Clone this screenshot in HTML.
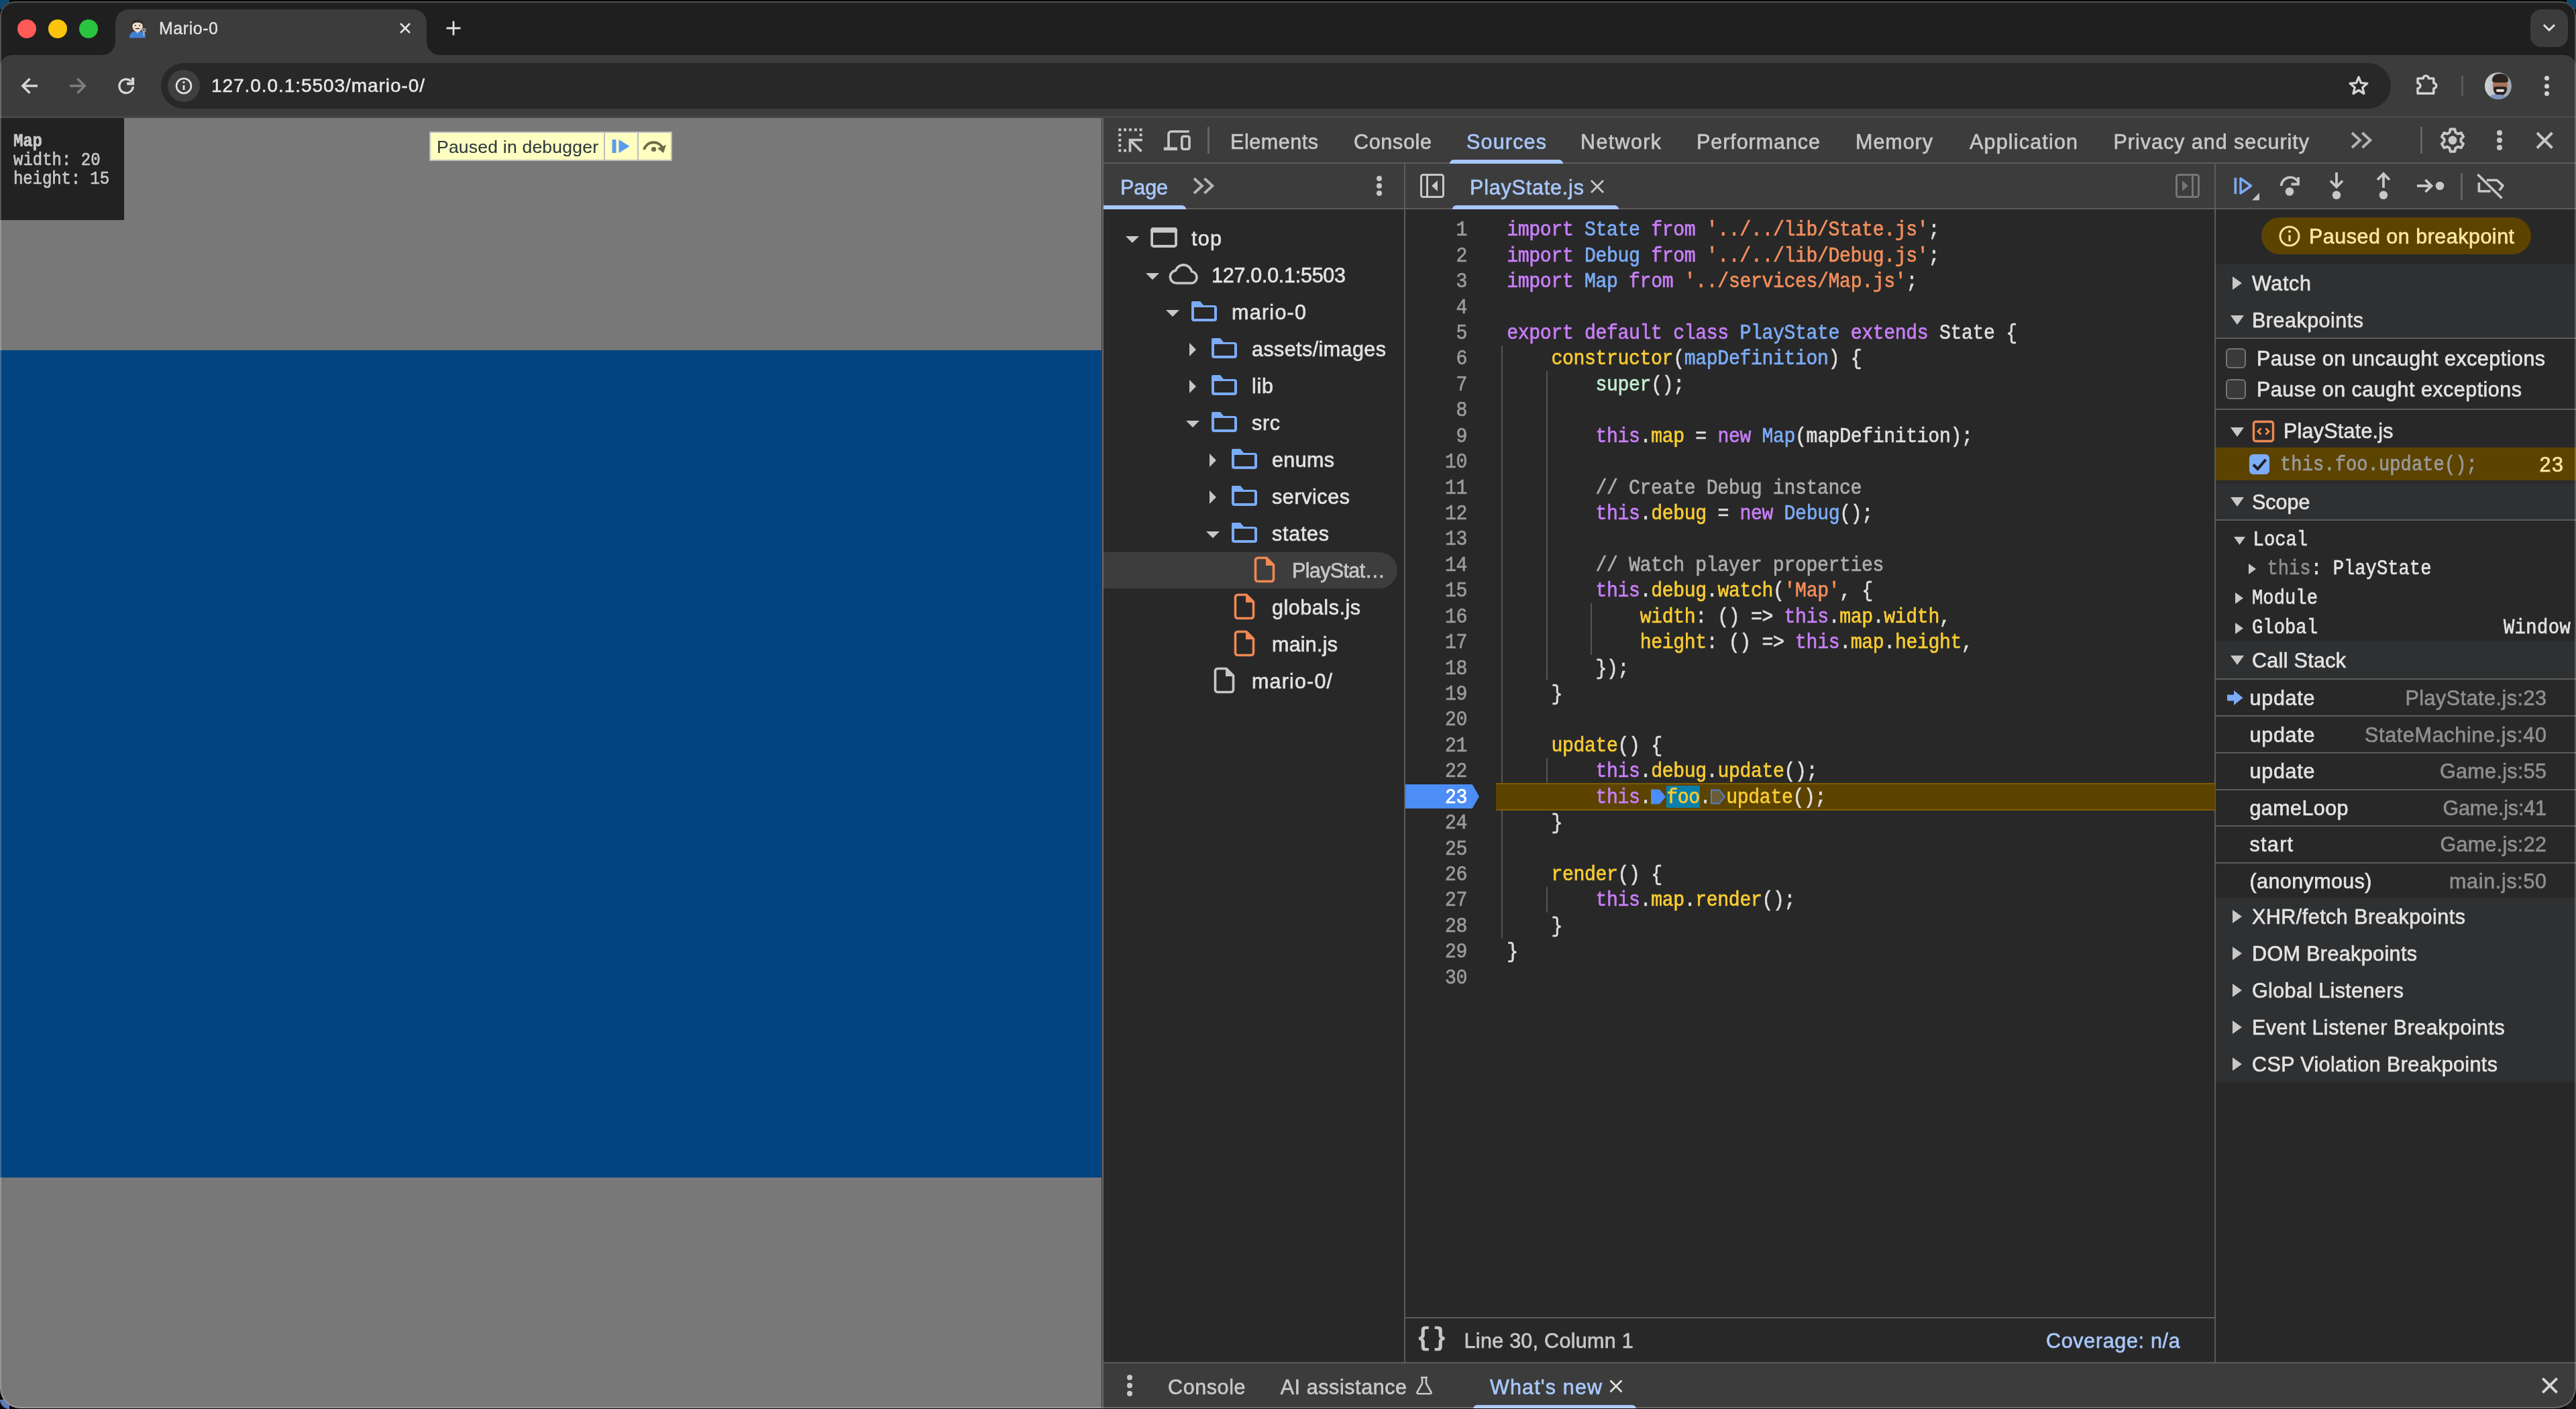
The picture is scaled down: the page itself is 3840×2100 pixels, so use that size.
<!DOCTYPE html>
<html><head><meta charset="utf-8"><title>Mario-0</title><style>
html,body{margin:0;padding:0}
body{width:3840px;height:2100px;position:relative;overflow:hidden;background:#050608;font-family:"Liberation Sans",sans-serif;}
.r{position:absolute;display:block}
.t{position:absolute;white-space:pre;-webkit-text-stroke:0.65px;}
#w{position:absolute;left:0;top:0;width:3840px;height:2100px;will-change:transform;overflow:hidden;clip-path:inset(2px 0px 1px 0px round 22px 22px 30px 30px)}
.c{position:absolute;width:14px;height:14px}
.m{font-family:"Liberation Mono",monospace;-webkit-text-stroke:0.6px;transform:scaleY(1.12);transform-origin:50% 50%}
</style></head>
<body><div class="c" style="left:0;top:0;background:#10486f"></div><div class="c" style="right:0;top:0;background:#10486f"></div><div class="c" style="left:0;bottom:0;background:#5f7bb8;border-radius:0 0 0 24px"></div><div class="c" style="right:0;bottom:0;background:#1b1b1b"></div><div id="w">
<!-- s_chrome -->
<div class="r" style="left:0px;top:0px;width:3840px;height:110px;background:#1f1f1f;"></div>
<div class="r" style="left:0px;top:82px;width:3840px;height:94px;background:#3c3c3c;border-radius:18px 18px 0 0;"></div>
<div class="r" style="left:0px;top:173px;width:3840px;height:3px;background:#474747;"></div>
<div class="r" style="left:172px;top:14px;width:464px;height:70px;background:#3c3c3c;border-radius:20px 20px 0 0;"></div>
<svg class="r" style="left:152px;top:62px;" width="20" height="20" viewBox="0 0 20 20"><path d="M20 0 V20 H0 A20 20 0 0 0 20 0Z" fill="#3c3c3c"/></svg>
<svg class="r" style="left:636px;top:62px;" width="20" height="20" viewBox="0 0 20 20"><path d="M0 0 V20 H20 A20 20 0 0 1 0 0Z" fill="#3c3c3c"/></svg>
<div class="r" style="left:26px;top:29px;width:28px;height:28px;background:#fe5a58;border-radius:50%;"></div>
<div class="r" style="left:72px;top:29px;width:28px;height:28px;background:#fcc40c;border-radius:50%;"></div>
<div class="r" style="left:118px;top:29px;width:28px;height:28px;background:#29c440;border-radius:50%;"></div>
<svg class="r" style="left:190px;top:27px;" width="30" height="30" viewBox="0 0 30 30"><path d="M3 29.5 Q3 21 10 20 L20 20 Q27 21 27 29.5Z" fill="#3f7fd6"/><path d="M12 19 L15 23 L18 19Z" fill="#e9c4ad"/><ellipse cx="15" cy="12" rx="7.6" ry="8.6" fill="#f6dccb"/><path d="M6.6 11 Q6 2.5 15 2.2 Q24 2.5 23.4 11 Q21.5 6.5 15 6.5 Q8.500 6.5 6.6 11Z" fill="#2f2a28"/><path d="M10.5 15.8 Q15 13.6 19.5 15.8 Q15 17.4 10.5 15.800Z" fill="#2f2a28"/><circle cx="11.8" cy="11" r="1" fill="#3a3330"/><circle cx="18.2" cy="11" r="1" fill="#3a3330"/><path d="M24.5 19 v7.5" stroke="#aab2bb" stroke-width="2.2"/><circle cx="24.5" cy="18" r="2.2" fill="none" stroke="#aab2bb" stroke-width="1.6"/></svg>
<div class="t" style="left:237.0px;top:26.0px;height:32px;line-height:32px;font-size:25px;color:#e3e3e3;letter-spacing:0.54px;-webkit-text-stroke:0.35px;">Mario-0</div>
<svg class="r" style="left:594px;top:32px;" width="20" height="20" viewBox="0 0 20 20"><path d="M3 3 L17 17 M17 3 L3 17" stroke="#e3e3e3" stroke-width="2.6" fill="none"/></svg>
<svg class="r" style="left:664px;top:30px;" width="24" height="24" viewBox="0 0 24 24"><path d="M12 1.5 V22.5 M1.5 12 H22.5" stroke="#e3e3e3" stroke-width="2.8" fill="none"/></svg>
<div class="r" style="left:3772px;top:14px;width:56px;height:56px;background:#3c3c3c;border-radius:16px;"></div>
<svg class="r" style="left:3788px;top:32px;" width="24" height="20" viewBox="0 0 24 20"><path d="M4 5 L12 13 L20 5" stroke="#e3e3e3" stroke-width="3" fill="none"/></svg>
<svg class="r" style="left:28px;top:112px;" width="32" height="32" viewBox="0 0 32 32"><path d="M28 16 H6 M16.5 5.2 L5.700 16 L16.5 26.8" stroke="#d6d6d6" stroke-width="3.4" fill="none"/></svg>
<svg class="r" style="left:100px;top:112px;" width="32" height="32" viewBox="0 0 32 32"><path d="M4 16 H26 M15.5 5.2 L26.3 16 L15.5 26.8" stroke="#7d7d7d" stroke-width="3.4" fill="none"/></svg>
<svg class="r" style="left:172px;top:112px;" width="32" height="32" viewBox="0 0 32 32"><path d="M26.3 17 A10.2 10.2 0 1 1 23.2 9" stroke="#d6d6d6" stroke-width="3.3" fill="none"/><path d="M26 3.8 V12.6 H17.2" stroke="#d6d6d6" stroke-width="4.2" fill="none" stroke-linejoin="miter"/></svg>
<div class="r" style="left:240px;top:94px;width:3324px;height:68px;background:#282828;border-radius:34px;"></div>
<div class="r" style="left:250px;top:104px;width:48px;height:48px;background:#3f3f3f;border-radius:50%;"></div>
<svg class="r" style="left:261px;top:115px;" width="26" height="26" viewBox="0 0 26 26"><circle cx="13" cy="13" r="11" stroke="#e3e3e3" stroke-width="2.6" fill="none"/><path d="M13 12 V19" stroke="#e3e3e3" stroke-width="2.8"/><circle cx="13" cy="7.6" r="1.7" fill="#e3e3e3"/></svg>
<div class="t" style="left:315.0px;top:110.0px;height:36px;line-height:36px;font-size:28px;color:#e8e8e8;letter-spacing:0.94px;-webkit-text-stroke:0.5px;">127.0.0.1:5503/mario-0/</div>
<svg class="r" style="left:3498px;top:108px;" width="36" height="38" viewBox="0 0 36 38"><path d="M18.0 6.9 L21.5 15.6 L30.9 16.3 L23.7 22.4 L26.0 31.5 L18.0 26.5 L10.0 31.5 L12.3 22.4 L5.1 16.3 L14.5 15.6Z" stroke="#d4d4d4" stroke-width="3.3" fill="none" stroke-linejoin="round"/></svg>
<svg class="r" style="left:3598px;top:108px;" width="40" height="40" viewBox="0 0 40 40"><path d="M6 8.9 H14.3 A4 4 0 0 1 22.3 8.9 H29.8 V15.7 A4 4 0 0 1 29.8 23.7 V31.3 H6 V23.7 A4 4 0 0 0 6 15.7Z" stroke="#d4d4d4" stroke-width="3.4" fill="none" stroke-linejoin="round"/></svg>
<div class="r" style="left:3669px;top:112px;width:3px;height:32px;background:#5a5a5a;border-radius:2px;"></div>
<div class="r" style="left:3704px;top:108px;width:40px;height:40px;border-radius:50%;overflow:hidden;background:linear-gradient(90deg,#cfd3d6 0,#b9bec4 45%,#9aa3ad 100%);"><div class="r" style="left:12px;top:6px;width:22px;height:28px;border-radius:45%;background:#a87455;"></div><div class="r" style="left:11px;top:2px;width:24px;height:13px;border-radius:12px 12px 5px 5px;background:#2a2320;"></div><div class="r" style="left:13px;top:21px;width:20px;height:14px;border-radius:4px 4px 10px 10px;background:#2a2320;"></div><div class="r" style="left:17px;top:25px;width:12px;height:4px;border-radius:2px;background:#e8ded8;"></div><div class="r" style="left:4px;top:33px;width:30px;height:12px;border-radius:10px 10px 0 0;background:#7f93bd;"></div></div>
<div class="r" style="left:3792.5px;top:113.3px;width:7px;height:7px;background:#d4d4d4;border-radius:50%;"></div>
<div class="r" style="left:3792.5px;top:124.5px;width:7px;height:7px;background:#d4d4d4;border-radius:50%;"></div>
<div class="r" style="left:3792.5px;top:135.7px;width:7px;height:7px;background:#d4d4d4;border-radius:50%;"></div>
<div class="r" style="left:0px;top:176px;width:1642px;height:1924px;background:#787878;"></div>
<div class="r" style="left:0px;top:522px;width:1642px;height:1233px;background:#024482;"></div>
<div class="r" style="left:0px;top:176px;width:185px;height:152px;background:#222222;"></div>
<div class="t m" style="left:20.0px;top:194.5px;height:31px;line-height:31px;font-size:24px;color:#c8c8c8;font-weight:700;letter-spacing:-0.10px;">Map</div>
<div class="t m" style="left:20.0px;top:222.5px;height:31px;line-height:31px;font-size:24px;color:#c8c8c8;">width: 20</div>
<div class="t m" style="left:20.0px;top:250.5px;height:31px;line-height:31px;font-size:24px;color:#c8c8c8;letter-spacing:-0.11px;">height: 15</div>
<div class="r" style="left:640px;top:196px;width:362px;height:44px;background:#ffffc2;box-sizing:border-box;border:2px solid #bdbdbd;"></div>
<div class="r" style="left:900px;top:198px;width:2px;height:40px;background:#bdbdbd;"></div>
<div class="r" style="left:950px;top:198px;width:2px;height:40px;background:#bdbdbd;"></div>
<div class="t" style="left:651.0px;top:201.5px;height:34px;line-height:34px;font-size:26.5px;color:#2f3a3e;letter-spacing:0.22px;-webkit-text-stroke:0.1px;">Paused in debugger</div>
<svg class="r" style="left:910px;top:206px;" width="32" height="24" viewBox="0 0 32 24"><rect x="2.5" y="2" width="6" height="20" fill="#5a9bf0"/><path d="M12.5 2 L28.5 12 L12.5 22Z" fill="#5a9bf0"/></svg>
<svg class="r" style="left:956px;top:204px;" width="40" height="28" viewBox="0 0 40 28"><path d="M4 19 A15 15 0 0 1 32 17" stroke="#6b6b47" stroke-width="4" fill="none"/><path d="M37 12 L33 24 L24 17Z" fill="#6b6b47"/><circle cx="18.5" cy="18.5" r="3.6" fill="#6b6b47"/></svg>
<div class="r" style="left:1642px;top:176px;width:1px;height:1924px;background:#333;"></div>
<div class="r" style="left:1643px;top:176px;width:2px;height:1924px;background:#6a6a6a;"></div>
<!-- s_dttop -->
<div class="r" style="left:1645px;top:176px;width:2195px;height:1924px;background:#282828;"></div>
<div class="r" style="left:1645px;top:176px;width:2195px;height:66px;background:#3c3c3c;"></div>
<div class="r" style="left:1645px;top:242px;width:2195px;height:2px;background:#5c5c5c;"></div>
<svg class="r" style="left:1660px;top:186px;" width="50" height="46" viewBox="0 0 50 46"><rect x="7.3" y="5.4" width="4" height="4" fill="#c7c7c7"/><rect x="15.1" y="5.4" width="4" height="4" fill="#c7c7c7"/><rect x="22.9" y="5.4" width="4" height="4" fill="#c7c7c7"/><rect x="30.8" y="5.4" width="4" height="4" fill="#c7c7c7"/><rect x="38.6" y="5.4" width="4" height="4" fill="#c7c7c7"/><rect x="7.3" y="13.1" width="4" height="4" fill="#c7c7c7"/><rect x="7.3" y="20.9" width="4" height="4" fill="#c7c7c7"/><rect x="7.3" y="28.7" width="4" height="4" fill="#c7c7c7"/><rect x="7.3" y="36.4" width="4" height="4" fill="#c7c7c7"/><rect x="38.6" y="13.1" width="4" height="4" fill="#c7c7c7"/><rect x="15.1" y="36.4" width="4" height="4" fill="#c7c7c7"/><path d="M42.8 22.6 H24.5 V40.6 M24.5 22.6 L41.5 39.6" stroke="#c7c7c7" stroke-width="3.7" fill="none"/></svg>
<svg class="r" style="left:1730px;top:190px;" width="50" height="40" viewBox="0 0 50 40"><path d="M12 29.7 V10 a4 4 0 0 1 4 -4 H42.7" stroke="#c7c7c7" stroke-width="3.6" fill="none"/><path d="M4.8 31.8 H25" stroke="#c7c7c7" stroke-width="4.7" fill="none"/><rect x="31.8" y="13.2" width="11.2" height="19.1" rx="2.5" stroke="#c7c7c7" stroke-width="3.6" fill="none"/></svg>
<div class="r" style="left:1800px;top:189px;width:3px;height:40px;background:#646464;"></div>
<div class="t" style="left:1834.0px;top:191.0px;height:40px;line-height:40px;font-size:30.5px;color:#c7c7c7;letter-spacing:0.55px;">Elements</div>
<div class="t" style="left:2018.0px;top:191.0px;height:40px;line-height:40px;font-size:30.5px;color:#c7c7c7;letter-spacing:0.68px;">Console</div>
<div class="t" style="left:2186.0px;top:191.0px;height:40px;line-height:40px;font-size:30.5px;color:#a8c7fa;letter-spacing:1.18px;">Sources</div>
<div class="t" style="left:2356.0px;top:191.0px;height:40px;line-height:40px;font-size:30.5px;color:#c7c7c7;letter-spacing:1.36px;">Network</div>
<div class="t" style="left:2529.0px;top:191.0px;height:40px;line-height:40px;font-size:30.5px;color:#c7c7c7;letter-spacing:0.94px;">Performance</div>
<div class="t" style="left:2766.0px;top:191.0px;height:40px;line-height:40px;font-size:30.5px;color:#c7c7c7;letter-spacing:0.97px;">Memory</div>
<div class="t" style="left:2936.0px;top:191.0px;height:40px;line-height:40px;font-size:30.5px;color:#c7c7c7;letter-spacing:1.18px;">Application</div>
<div class="t" style="left:3150.5px;top:191.0px;height:40px;line-height:40px;font-size:30.5px;color:#c7c7c7;letter-spacing:0.98px;">Privacy and security</div>
<div class="r" style="left:2161px;top:238px;width:169px;height:6px;background:#a8c7fa;border-radius:6px 6px 0 0;"></div>
<svg class="r" style="left:3503px;top:194px;" width="36" height="30" viewBox="0 0 36 30"><path d="M3 4 L15 15 L3 26 M18.4 4 L30.4 15 L18.4 26" stroke="#b4b4b4" stroke-width="3.9" fill="none"/></svg>
<div class="r" style="left:3607.5px;top:189px;width:3px;height:40px;background:#646464;"></div>
<svg class="r" style="left:3636px;top:189px;" width="40" height="40" viewBox="0 0 40 40"><path fill="none" stroke="#c7c7c7" stroke-width="3.9" stroke-linejoin="round" d="M16.6 3.5 h6.8 l1 4.9 l3.6 2.1 l4.7 -1.6 l3.4 5.9 l-3.7 3.3 v4 l3.7 3.3 l-3.4 5.9 l-4.7 -1.6 l-3.6 2.1 l-1 4.9 h-6.8 l-1 -4.9 l-3.6 -2.1 l-4.7 1.6 l-3.4 -5.9 l3.7 -3.3 v-4 l-3.7 -3.3 l3.4 -5.9 l4.7 1.6 l3.6 -2.1Z"/><circle cx="20" cy="20" r="6.4" fill="#c7c7c7"/></svg>
<div class="r" style="left:3721.8px;top:193.5px;width:8.4px;height:8.4px;background:#c7c7c7;border-radius:50%;"></div><div class="r" style="left:3721.8px;top:204.8px;width:8.4px;height:8.4px;background:#c7c7c7;border-radius:50%;"></div><div class="r" style="left:3721.8px;top:216.10000000000002px;width:8.4px;height:8.4px;background:#c7c7c7;border-radius:50%;"></div>
<svg class="r" style="left:3777px;top:193px;" width="32" height="32" viewBox="0 0 32 32"><path d="M5 5 L27.5 27.5 M27.5 5 L5 27.5" stroke="#c7c7c7" stroke-width="3.9" fill="none"/></svg>
<div class="r" style="left:1645px;top:244px;width:2195px;height:66px;background:#3c3c3c;"></div>
<div class="r" style="left:1645px;top:310px;width:2195px;height:2px;background:#5c5c5c;"></div>
<div class="r" style="left:2093px;top:244px;width:2px;height:1786px;background:#5c5c5c;"></div>
<div class="r" style="left:3301px;top:244px;width:2px;height:1786px;background:#5c5c5c;"></div>
<div class="t" style="left:1670.0px;top:259.0px;height:40px;line-height:40px;font-size:30.5px;color:#a8c7fa;letter-spacing:-0.08px;">Page</div>
<div class="r" style="left:1645px;top:306px;width:123px;height:6px;background:#a8c7fa;border-radius:0 6px 0 0;"></div>
<svg class="r" style="left:1777px;top:262px;" width="36" height="30" viewBox="0 0 36 30"><path d="M3 4 L15 15 L3 26 M18.4 4 L30.4 15 L18.4 26" stroke="#b4b4b4" stroke-width="3.9" fill="none"/></svg>
<div class="r" style="left:2051.8px;top:261.5px;width:8.4px;height:8.4px;background:#c7c7c7;border-radius:50%;"></div><div class="r" style="left:2051.8px;top:272.8px;width:8.4px;height:8.4px;background:#c7c7c7;border-radius:50%;"></div><div class="r" style="left:2051.8px;top:284.1px;width:8.4px;height:8.4px;background:#c7c7c7;border-radius:50%;"></div>
<svg class="r" style="left:2115px;top:257px;" width="40" height="40" viewBox="0 0 40 40"><rect x="3.5" y="3.5" width="33" height="33" rx="3" stroke="#c7c7c7" stroke-width="3" fill="none"/><path d="M12.5 3.5 V36.5" stroke="#c7c7c7" stroke-width="3"/><path d="M28 12 V28 L19 20Z" fill="#c7c7c7"/></svg>
<div class="t" style="left:2191.0px;top:259.0px;height:40px;line-height:40px;font-size:30.5px;color:#a8c7fa;letter-spacing:0.81px;">PlayState.js</div>
<svg class="r" style="left:2369px;top:266px;" width="24" height="24" viewBox="0 0 24 24"><path d="M3 3 L21 21 M21 3 L3 21" stroke="#c7c7c7" stroke-width="2.8" fill="none"/></svg>
<div class="r" style="left:2165px;top:306px;width:248px;height:6px;background:#a8c7fa;border-radius:6px 6px 0 0;"></div>
<svg class="r" style="left:3241px;top:257px;" width="40" height="40" viewBox="0 0 40 40"><rect x="3.5" y="3.5" width="33" height="33" rx="3" stroke="#757575" stroke-width="3" fill="none"/><path d="M27.5 3.5 V36.5" stroke="#757575" stroke-width="3"/><path d="M12 12 V28 L21 20Z" fill="#757575"/></svg>
<svg class="r" style="left:3326px;top:258px;" width="44" height="42" viewBox="0 0 44 42"><path d="M6.3 7 V31" stroke="#7cacf8" stroke-width="3.6"/><path d="M14 8 L29.5 19 L14 30Z" stroke="#7cacf8" stroke-width="3.4" fill="none" stroke-linejoin="round"/><path d="M42 29.5 V40.5 H31Z" fill="#c7c7c7"/></svg>
<svg class="r" style="left:3392px;top:256px;" width="44" height="42" viewBox="0 0 44 42"><path d="M8.5 21 A13.5 13.5 0 0 1 33 14" stroke="#c7c7c7" stroke-width="3.8" fill="none"/><path d="M34 8 V18.5 H23.5" stroke="#c7c7c7" stroke-width="3.8" fill="none"/><circle cx="21" cy="29.5" r="6.3" fill="#c7c7c7"/></svg>
<svg class="r" style="left:3462px;top:254px;" width="42" height="48" viewBox="0 0 42 48"><path d="M21 3 V24 M12 15.5 L21 24.5 L30 15.5" stroke="#c7c7c7" stroke-width="3.8" fill="none"/><circle cx="21" cy="36.7" r="6.3" fill="#c7c7c7"/></svg>
<svg class="r" style="left:3532px;top:254px;" width="42" height="48" viewBox="0 0 42 48"><path d="M21 26 V5.5 M12 14 L21 5 L30 14" stroke="#c7c7c7" stroke-width="3.8" fill="none"/><circle cx="21" cy="36.7" r="6.3" fill="#c7c7c7"/></svg>
<svg class="r" style="left:3598px;top:258px;" width="52" height="38" viewBox="0 0 52 38"><path d="M5 19 H26 M17.5 10 L26.5 19 L17.5 28" stroke="#c7c7c7" stroke-width="3.8" fill="none"/><circle cx="39" cy="19" r="6.3" fill="#c7c7c7"/></svg>
<div class="r" style="left:3667.5px;top:258px;width:3px;height:40px;background:#646464;"></div>
<svg class="r" style="left:3690px;top:256px;" width="48" height="42" viewBox="0 0 48 42"><path d="M17 12.5 H32 L41 20.7 L35.8 27.8 M5.4 16 V29 H22.7" stroke="#c7c7c7" stroke-width="3.6" fill="none" stroke-linejoin="round"/><path d="M3.5 4 L39.5 39.5" stroke="#c7c7c7" stroke-width="3.6"/></svg>
<!-- s_nav -->
<div class="r" style="left:1645px;top:823px;width:438px;height:54px;background:#3d3d3d;border-radius:0 27px 27px 0;"></div>
<svg class="r" style="left:1677px;top:351px;" width="22" height="12" viewBox="0 0 22 12"><path d="M1 1 H21 L11 11Z" fill="#c7c7c7"/></svg>
<svg class="r" style="left:1714px;top:338px;" width="42" height="32" viewBox="0 0 42 32"><rect x="3.1" y="3" width="35.9" height="26" rx="2.5" stroke="#c7c7c7" stroke-width="3.8" fill="none"/><path d="M1.2 8.8 V5 a4 4 0 0 1 4 -3.9 H37 a4 4 0 0 1 3.9 3.9 V8.800Z" fill="#c7c7c7"/></svg>
<div class="t" style="left:1776.0px;top:335.0px;height:40px;line-height:40px;font-size:30.5px;color:#e3e3e3;letter-spacing:1.30px;">top</div>
<svg class="r" style="left:1707px;top:406px;" width="22" height="12" viewBox="0 0 22 12"><path d="M1 1 H21 L11 11Z" fill="#c7c7c7"/></svg>
<svg class="r" style="left:1741px;top:393px;" width="50" height="34" viewBox="0 0 50 34"><path d="M13 29 a9.5 9.5 0 0 1 -1.5 -18.9 a12.5 12.5 0 0 1 24 1.6 a8.8 8.8 0 0 1 0.5 17.3Z" stroke="#c7c7c7" stroke-width="3.7" fill="none" stroke-linejoin="round"/></svg>
<div class="t" style="left:1806.0px;top:390.0px;height:40px;line-height:40px;font-size:30.5px;color:#e3e3e3;letter-spacing:-0.27px;">127.0.0.1:5503</div>
<svg class="r" style="left:1737px;top:461px;" width="22" height="12" viewBox="0 0 22 12"><path d="M1 1 H21 L11 11Z" fill="#c7c7c7"/></svg>
<svg class="r" style="left:1774px;top:447px;" width="42" height="34" viewBox="0 0 42 34"><path d="M4 2 H15 L20 8 H21 V11 H6 V28 H36 V11 H21 V8 H36 a4 4 0 0 1 4 4 V28 a4 4 0 0 1 -4 4 H6 a4 4 0 0 1 -4 -4 V4 a2 2 0 0 1 2 -2Z" fill="#7cacf8"/></svg>
<div class="t" style="left:1836.0px;top:445.0px;height:40px;line-height:40px;font-size:30.5px;color:#e3e3e3;letter-spacing:1.27px;">mario-0</div>
<svg class="r" style="left:1772px;top:510px;" width="12" height="22" viewBox="0 0 12 22"><path d="M1 1 V21 L11 11Z" fill="#c7c7c7"/></svg>
<svg class="r" style="left:1804px;top:502px;" width="42" height="34" viewBox="0 0 42 34"><path d="M4 2 H15 L20 8 H21 V11 H6 V28 H36 V11 H21 V8 H36 a4 4 0 0 1 4 4 V28 a4 4 0 0 1 -4 4 H6 a4 4 0 0 1 -4 -4 V4 a2 2 0 0 1 2 -2Z" fill="#7cacf8"/></svg>
<div class="t" style="left:1866.0px;top:500.0px;height:40px;line-height:40px;font-size:30.5px;color:#e3e3e3;letter-spacing:0.42px;">assets/images</div>
<svg class="r" style="left:1772px;top:565px;" width="12" height="22" viewBox="0 0 12 22"><path d="M1 1 V21 L11 11Z" fill="#c7c7c7"/></svg>
<svg class="r" style="left:1804px;top:557px;" width="42" height="34" viewBox="0 0 42 34"><path d="M4 2 H15 L20 8 H21 V11 H6 V28 H36 V11 H21 V8 H36 a4 4 0 0 1 4 4 V28 a4 4 0 0 1 -4 4 H6 a4 4 0 0 1 -4 -4 V4 a2 2 0 0 1 2 -2Z" fill="#7cacf8"/></svg>
<div class="t" style="left:1866.0px;top:555.0px;height:40px;line-height:40px;font-size:30.5px;color:#e3e3e3;letter-spacing:0.74px;">lib</div>
<svg class="r" style="left:1767px;top:626px;" width="22" height="12" viewBox="0 0 22 12"><path d="M1 1 H21 L11 11Z" fill="#c7c7c7"/></svg>
<svg class="r" style="left:1804px;top:612px;" width="42" height="34" viewBox="0 0 42 34"><path d="M4 2 H15 L20 8 H21 V11 H6 V28 H36 V11 H21 V8 H36 a4 4 0 0 1 4 4 V28 a4 4 0 0 1 -4 4 H6 a4 4 0 0 1 -4 -4 V4 a2 2 0 0 1 2 -2Z" fill="#7cacf8"/></svg>
<div class="t" style="left:1866.0px;top:610.0px;height:40px;line-height:40px;font-size:30.5px;color:#e3e3e3;letter-spacing:0.67px;">src</div>
<svg class="r" style="left:1802px;top:675px;" width="12" height="22" viewBox="0 0 12 22"><path d="M1 1 V21 L11 11Z" fill="#c7c7c7"/></svg>
<svg class="r" style="left:1834px;top:667px;" width="42" height="34" viewBox="0 0 42 34"><path d="M4 2 H15 L20 8 H21 V11 H6 V28 H36 V11 H21 V8 H36 a4 4 0 0 1 4 4 V28 a4 4 0 0 1 -4 4 H6 a4 4 0 0 1 -4 -4 V4 a2 2 0 0 1 2 -2Z" fill="#7cacf8"/></svg>
<div class="t" style="left:1896.0px;top:665.0px;height:40px;line-height:40px;font-size:30.5px;color:#e3e3e3;letter-spacing:0.36px;">enums</div>
<svg class="r" style="left:1802px;top:730px;" width="12" height="22" viewBox="0 0 12 22"><path d="M1 1 V21 L11 11Z" fill="#c7c7c7"/></svg>
<svg class="r" style="left:1834px;top:722px;" width="42" height="34" viewBox="0 0 42 34"><path d="M4 2 H15 L20 8 H21 V11 H6 V28 H36 V11 H21 V8 H36 a4 4 0 0 1 4 4 V28 a4 4 0 0 1 -4 4 H6 a4 4 0 0 1 -4 -4 V4 a2 2 0 0 1 2 -2Z" fill="#7cacf8"/></svg>
<div class="t" style="left:1896.0px;top:720.0px;height:40px;line-height:40px;font-size:30.5px;color:#e3e3e3;letter-spacing:0.59px;">services</div>
<svg class="r" style="left:1797px;top:791px;" width="22" height="12" viewBox="0 0 22 12"><path d="M1 1 H21 L11 11Z" fill="#c7c7c7"/></svg>
<svg class="r" style="left:1834px;top:777px;" width="42" height="34" viewBox="0 0 42 34"><path d="M4 2 H15 L20 8 H21 V11 H6 V28 H36 V11 H21 V8 H36 a4 4 0 0 1 4 4 V28 a4 4 0 0 1 -4 4 H6 a4 4 0 0 1 -4 -4 V4 a2 2 0 0 1 2 -2Z" fill="#7cacf8"/></svg>
<div class="t" style="left:1896.0px;top:775.0px;height:40px;line-height:40px;font-size:30.5px;color:#e3e3e3;letter-spacing:0.73px;">states</div>
<svg class="r" style="left:1869px;top:829px;" width="32" height="40" viewBox="0 0 32 40"><path d="M6 2.5 H19 L29.5 13 V34 a3.5 3.5 0 0 1 -3.5 3.5 H6 a3.5 3.5 0 0 1 -3.5 -3.5 V6 a3.5 3.5 0 0 1 3.5 -3.5Z" stroke="#ee8953" stroke-width="3.6" fill="none" stroke-linejoin="round"/><path d="M18 2 H20 L30 12 V14 H18Z" fill="#ee8953"/></svg>
<div class="t" style="left:1926.0px;top:830.0px;height:40px;line-height:40px;font-size:30.5px;color:#c7c7c7;letter-spacing:-0.64px;">PlayStat…</div>
<svg class="r" style="left:1839px;top:884px;" width="32" height="40" viewBox="0 0 32 40"><path d="M6 2.5 H19 L29.5 13 V34 a3.5 3.5 0 0 1 -3.5 3.5 H6 a3.5 3.5 0 0 1 -3.5 -3.5 V6 a3.5 3.5 0 0 1 3.5 -3.5Z" stroke="#ee8953" stroke-width="3.6" fill="none" stroke-linejoin="round"/><path d="M18 2 H20 L30 12 V14 H18Z" fill="#ee8953"/></svg>
<div class="t" style="left:1896.0px;top:885.0px;height:40px;line-height:40px;font-size:30.5px;color:#e3e3e3;letter-spacing:0.54px;">globals.js</div>
<svg class="r" style="left:1839px;top:939px;" width="32" height="40" viewBox="0 0 32 40"><path d="M6 2.5 H19 L29.5 13 V34 a3.5 3.5 0 0 1 -3.5 3.5 H6 a3.5 3.5 0 0 1 -3.5 -3.5 V6 a3.5 3.5 0 0 1 3.5 -3.5Z" stroke="#ee8953" stroke-width="3.6" fill="none" stroke-linejoin="round"/><path d="M18 2 H20 L30 12 V14 H18Z" fill="#ee8953"/></svg>
<div class="t" style="left:1896.0px;top:940.0px;height:40px;line-height:40px;font-size:30.5px;color:#e3e3e3;letter-spacing:0.23px;">main.js</div>
<svg class="r" style="left:1809px;top:994px;" width="32" height="40" viewBox="0 0 32 40"><path d="M6 2.5 H19 L29.5 13 V34 a3.5 3.5 0 0 1 -3.5 3.5 H6 a3.5 3.5 0 0 1 -3.5 -3.5 V6 a3.5 3.5 0 0 1 3.5 -3.5Z" stroke="#c7c7c7" stroke-width="3.6" fill="none" stroke-linejoin="round"/><path d="M18 2 H20 L30 12 V14 H18Z" fill="#c7c7c7"/></svg>
<div class="t" style="left:1866.0px;top:995.0px;height:40px;line-height:40px;font-size:30.5px;color:#e3e3e3;letter-spacing:1.16px;">mario-0/</div>
<!-- s_editor -->
<div class="r" style="left:2238px;top:515px;width:2px;height:884px;background:#555;"></div>
<div class="r" style="left:2304.5px;top:553px;width:2px;height:461px;background:#555;"></div>
<div class="r" style="left:2304.5px;top:1130px;width:2px;height:77px;background:#555;"></div>
<div class="r" style="left:2304.5px;top:1322px;width:2px;height:38px;background:#555;"></div>
<div class="r" style="left:2371px;top:899px;width:2px;height:77px;background:#555;"></div>
<div class="r" style="left:2230px;top:1167px;width:1072px;height:41px;background:#5c4300;box-sizing:border-box;border-top:2px solid #7d5c00;border-bottom:2px solid #7d5c00;"></div>
<svg class="r" style="left:2095px;top:1168px;" width="112" height="38" viewBox="0 0 112 38"><path d="M0 1 H98 a3 3 0 0 1 2.4 1.2 L110 19 L100.4 35.8 a3 3 0 0 1 -2.4 1.2 H0Z" fill="#4c8df6"/></svg>
<div class="t m" style="left:2170.5px;top:324.2px;height:38px;line-height:38px;font-size:28.2px;color:#9a9a9a;letter-spacing:-0.393px;white-space:pre;">1</div>
<div class="t m" style="left:2170.5px;top:362.6px;height:38px;line-height:38px;font-size:28.2px;color:#9a9a9a;letter-spacing:-0.393px;white-space:pre;">2</div>
<div class="t m" style="left:2170.5px;top:401.1px;height:38px;line-height:38px;font-size:28.2px;color:#9a9a9a;letter-spacing:-0.393px;white-space:pre;">3</div>
<div class="t m" style="left:2170.5px;top:439.5px;height:38px;line-height:38px;font-size:28.2px;color:#9a9a9a;letter-spacing:-0.393px;white-space:pre;">4</div>
<div class="t m" style="left:2170.5px;top:477.9px;height:38px;line-height:38px;font-size:28.2px;color:#9a9a9a;letter-spacing:-0.393px;white-space:pre;">5</div>
<div class="t m" style="left:2170.5px;top:516.4px;height:38px;line-height:38px;font-size:28.2px;color:#9a9a9a;letter-spacing:-0.393px;white-space:pre;">6</div>
<div class="t m" style="left:2170.5px;top:554.8px;height:38px;line-height:38px;font-size:28.2px;color:#9a9a9a;letter-spacing:-0.393px;white-space:pre;">7</div>
<div class="t m" style="left:2170.5px;top:593.2px;height:38px;line-height:38px;font-size:28.2px;color:#9a9a9a;letter-spacing:-0.393px;white-space:pre;">8</div>
<div class="t m" style="left:2170.5px;top:631.6px;height:38px;line-height:38px;font-size:28.2px;color:#9a9a9a;letter-spacing:-0.393px;white-space:pre;">9</div>
<div class="t m" style="left:2153.9px;top:670.1px;height:38px;line-height:38px;font-size:28.2px;color:#9a9a9a;letter-spacing:-0.393px;white-space:pre;">10</div>
<div class="t m" style="left:2153.9px;top:708.5px;height:38px;line-height:38px;font-size:28.2px;color:#9a9a9a;letter-spacing:-0.393px;white-space:pre;">11</div>
<div class="t m" style="left:2153.9px;top:746.9px;height:38px;line-height:38px;font-size:28.2px;color:#9a9a9a;letter-spacing:-0.393px;white-space:pre;">12</div>
<div class="t m" style="left:2153.9px;top:785.4px;height:38px;line-height:38px;font-size:28.2px;color:#9a9a9a;letter-spacing:-0.393px;white-space:pre;">13</div>
<div class="t m" style="left:2153.9px;top:823.8px;height:38px;line-height:38px;font-size:28.2px;color:#9a9a9a;letter-spacing:-0.393px;white-space:pre;">14</div>
<div class="t m" style="left:2153.9px;top:862.2px;height:38px;line-height:38px;font-size:28.2px;color:#9a9a9a;letter-spacing:-0.393px;white-space:pre;">15</div>
<div class="t m" style="left:2153.9px;top:900.7px;height:38px;line-height:38px;font-size:28.2px;color:#9a9a9a;letter-spacing:-0.393px;white-space:pre;">16</div>
<div class="t m" style="left:2153.9px;top:939.1px;height:38px;line-height:38px;font-size:28.2px;color:#9a9a9a;letter-spacing:-0.393px;white-space:pre;">17</div>
<div class="t m" style="left:2153.9px;top:977.5px;height:38px;line-height:38px;font-size:28.2px;color:#9a9a9a;letter-spacing:-0.393px;white-space:pre;">18</div>
<div class="t m" style="left:2153.9px;top:1015.9px;height:38px;line-height:38px;font-size:28.2px;color:#9a9a9a;letter-spacing:-0.393px;white-space:pre;">19</div>
<div class="t m" style="left:2153.9px;top:1054.4px;height:38px;line-height:38px;font-size:28.2px;color:#9a9a9a;letter-spacing:-0.393px;white-space:pre;">20</div>
<div class="t m" style="left:2153.9px;top:1092.8px;height:38px;line-height:38px;font-size:28.2px;color:#9a9a9a;letter-spacing:-0.393px;white-space:pre;">21</div>
<div class="t m" style="left:2153.9px;top:1131.2px;height:38px;line-height:38px;font-size:28.2px;color:#9a9a9a;letter-spacing:-0.393px;white-space:pre;">22</div>
<div class="t m" style="left:2153.9px;top:1169.7px;height:38px;line-height:38px;font-size:28.2px;color:#ffffff;letter-spacing:-0.393px;white-space:pre;">23</div>
<div class="t m" style="left:2153.9px;top:1208.1px;height:38px;line-height:38px;font-size:28.2px;color:#9a9a9a;letter-spacing:-0.393px;white-space:pre;">24</div>
<div class="t m" style="left:2153.9px;top:1246.5px;height:38px;line-height:38px;font-size:28.2px;color:#9a9a9a;letter-spacing:-0.393px;white-space:pre;">25</div>
<div class="t m" style="left:2153.9px;top:1285.0px;height:38px;line-height:38px;font-size:28.2px;color:#9a9a9a;letter-spacing:-0.393px;white-space:pre;">26</div>
<div class="t m" style="left:2153.9px;top:1323.4px;height:38px;line-height:38px;font-size:28.2px;color:#9a9a9a;letter-spacing:-0.393px;white-space:pre;">27</div>
<div class="t m" style="left:2153.9px;top:1361.8px;height:38px;line-height:38px;font-size:28.2px;color:#9a9a9a;letter-spacing:-0.393px;white-space:pre;">28</div>
<div class="t m" style="left:2153.9px;top:1400.2px;height:38px;line-height:38px;font-size:28.2px;color:#9a9a9a;letter-spacing:-0.393px;white-space:pre;">29</div>
<div class="t m" style="left:2153.9px;top:1438.7px;height:38px;line-height:38px;font-size:28.2px;color:#9a9a9a;letter-spacing:-0.393px;white-space:pre;">30</div>
<div class="t m" style="left:2246.3px;top:324.2px;height:38px;line-height:38px;font-size:28.2px;color:#c87ff8;letter-spacing:-0.393px;white-space:pre;">import</div>
<div class="t m" style="left:2362.0px;top:324.2px;height:38px;line-height:38px;font-size:28.2px;color:#7cacf8;letter-spacing:-0.393px;white-space:pre;">State</div>
<div class="t m" style="left:2461.2px;top:324.2px;height:38px;line-height:38px;font-size:28.2px;color:#c87ff8;letter-spacing:-0.393px;white-space:pre;">from</div>
<div class="t m" style="left:2543.8px;top:324.2px;height:38px;line-height:38px;font-size:28.2px;color:#f28e5c;letter-spacing:-0.393px;white-space:pre;">'../../lib/State.js'</div>
<div class="t m" style="left:2874.4px;top:324.2px;height:38px;line-height:38px;font-size:28.2px;color:#dedede;letter-spacing:-0.393px;white-space:pre;">;</div>
<div class="t m" style="left:2246.3px;top:362.6px;height:38px;line-height:38px;font-size:28.2px;color:#c87ff8;letter-spacing:-0.393px;white-space:pre;">import</div>
<div class="t m" style="left:2362.0px;top:362.6px;height:38px;line-height:38px;font-size:28.2px;color:#7cacf8;letter-spacing:-0.393px;white-space:pre;">Debug</div>
<div class="t m" style="left:2461.2px;top:362.6px;height:38px;line-height:38px;font-size:28.2px;color:#c87ff8;letter-spacing:-0.393px;white-space:pre;">from</div>
<div class="t m" style="left:2543.8px;top:362.6px;height:38px;line-height:38px;font-size:28.2px;color:#f28e5c;letter-spacing:-0.393px;white-space:pre;">'../../lib/Debug.js'</div>
<div class="t m" style="left:2874.4px;top:362.6px;height:38px;line-height:38px;font-size:28.2px;color:#dedede;letter-spacing:-0.393px;white-space:pre;">;</div>
<div class="t m" style="left:2246.3px;top:401.1px;height:38px;line-height:38px;font-size:28.2px;color:#c87ff8;letter-spacing:-0.393px;white-space:pre;">import</div>
<div class="t m" style="left:2362.0px;top:401.1px;height:38px;line-height:38px;font-size:28.2px;color:#7cacf8;letter-spacing:-0.393px;white-space:pre;">Map</div>
<div class="t m" style="left:2428.1px;top:401.1px;height:38px;line-height:38px;font-size:28.2px;color:#c87ff8;letter-spacing:-0.393px;white-space:pre;">from</div>
<div class="t m" style="left:2510.8px;top:401.1px;height:38px;line-height:38px;font-size:28.2px;color:#f28e5c;letter-spacing:-0.393px;white-space:pre;">'../services/Map.js'</div>
<div class="t m" style="left:2841.4px;top:401.1px;height:38px;line-height:38px;font-size:28.2px;color:#dedede;letter-spacing:-0.393px;white-space:pre;">;</div>
<div class="t m" style="left:2246.3px;top:477.9px;height:38px;line-height:38px;font-size:28.2px;color:#c87ff8;letter-spacing:-0.393px;white-space:pre;">export default class</div>
<div class="t m" style="left:2593.4px;top:477.9px;height:38px;line-height:38px;font-size:28.2px;color:#7cacf8;letter-spacing:-0.393px;white-space:pre;">PlayState</div>
<div class="t m" style="left:2758.7px;top:477.9px;height:38px;line-height:38px;font-size:28.2px;color:#c87ff8;letter-spacing:-0.393px;white-space:pre;">extends</div>
<div class="t m" style="left:2891.0px;top:477.9px;height:38px;line-height:38px;font-size:28.2px;color:#dedede;letter-spacing:-0.393px;white-space:pre;">State {</div>
<div class="t m" style="left:2312.4px;top:516.4px;height:38px;line-height:38px;font-size:28.2px;color:#f9cc33;letter-spacing:-0.393px;white-space:pre;">constructor</div>
<div class="t m" style="left:2494.2px;top:516.4px;height:38px;line-height:38px;font-size:28.2px;color:#dedede;letter-spacing:-0.393px;white-space:pre;">(</div>
<div class="t m" style="left:2510.8px;top:516.4px;height:38px;line-height:38px;font-size:28.2px;color:#7cacf8;letter-spacing:-0.393px;white-space:pre;">mapDefinition</div>
<div class="t m" style="left:2725.7px;top:516.4px;height:38px;line-height:38px;font-size:28.2px;color:#dedede;letter-spacing:-0.393px;white-space:pre;">) {</div>
<div class="t m" style="left:2378.5px;top:554.8px;height:38px;line-height:38px;font-size:28.2px;color:#c4eed0;letter-spacing:-0.393px;white-space:pre;">super</div>
<div class="t m" style="left:2461.2px;top:554.8px;height:38px;line-height:38px;font-size:28.2px;color:#dedede;letter-spacing:-0.393px;white-space:pre;">();</div>
<div class="t m" style="left:2378.5px;top:631.6px;height:38px;line-height:38px;font-size:28.2px;color:#c87ff8;letter-spacing:-0.393px;white-space:pre;">this</div>
<div class="t m" style="left:2444.7px;top:631.6px;height:38px;line-height:38px;font-size:28.2px;color:#dedede;letter-spacing:-0.393px;white-space:pre;">.</div>
<div class="t m" style="left:2461.2px;top:631.6px;height:38px;line-height:38px;font-size:28.2px;color:#f9cc33;letter-spacing:-0.393px;white-space:pre;">map</div>
<div class="t m" style="left:2527.3px;top:631.6px;height:38px;line-height:38px;font-size:28.2px;color:#dedede;letter-spacing:-0.393px;white-space:pre;">= </div>
<div class="t m" style="left:2560.4px;top:631.6px;height:38px;line-height:38px;font-size:28.2px;color:#c87ff8;letter-spacing:-0.393px;white-space:pre;">new</div>
<div class="t m" style="left:2626.5px;top:631.6px;height:38px;line-height:38px;font-size:28.2px;color:#7cacf8;letter-spacing:-0.393px;white-space:pre;">Map</div>
<div class="t m" style="left:2676.1px;top:631.6px;height:38px;line-height:38px;font-size:28.2px;color:#dedede;letter-spacing:-0.393px;white-space:pre;">(mapDefinition);</div>
<div class="t m" style="left:2378.5px;top:708.5px;height:38px;line-height:38px;font-size:28.2px;color:#adadad;letter-spacing:-0.393px;white-space:pre;">// Create Debug instance</div>
<div class="t m" style="left:2378.5px;top:746.9px;height:38px;line-height:38px;font-size:28.2px;color:#c87ff8;letter-spacing:-0.393px;white-space:pre;">this</div>
<div class="t m" style="left:2444.7px;top:746.9px;height:38px;line-height:38px;font-size:28.2px;color:#dedede;letter-spacing:-0.393px;white-space:pre;">.</div>
<div class="t m" style="left:2461.2px;top:746.9px;height:38px;line-height:38px;font-size:28.2px;color:#f9cc33;letter-spacing:-0.393px;white-space:pre;">debug</div>
<div class="t m" style="left:2560.4px;top:746.9px;height:38px;line-height:38px;font-size:28.2px;color:#dedede;letter-spacing:-0.393px;white-space:pre;">= </div>
<div class="t m" style="left:2593.4px;top:746.9px;height:38px;line-height:38px;font-size:28.2px;color:#c87ff8;letter-spacing:-0.393px;white-space:pre;">new</div>
<div class="t m" style="left:2659.6px;top:746.9px;height:38px;line-height:38px;font-size:28.2px;color:#7cacf8;letter-spacing:-0.393px;white-space:pre;">Debug</div>
<div class="t m" style="left:2742.2px;top:746.9px;height:38px;line-height:38px;font-size:28.2px;color:#dedede;letter-spacing:-0.393px;white-space:pre;">();</div>
<div class="t m" style="left:2378.5px;top:823.8px;height:38px;line-height:38px;font-size:28.2px;color:#adadad;letter-spacing:-0.393px;white-space:pre;">// Watch player properties</div>
<div class="t m" style="left:2378.5px;top:862.2px;height:38px;line-height:38px;font-size:28.2px;color:#c87ff8;letter-spacing:-0.393px;white-space:pre;">this</div>
<div class="t m" style="left:2444.7px;top:862.2px;height:38px;line-height:38px;font-size:28.2px;color:#dedede;letter-spacing:-0.393px;white-space:pre;">.</div>
<div class="t m" style="left:2461.2px;top:862.2px;height:38px;line-height:38px;font-size:28.2px;color:#f9cc33;letter-spacing:-0.393px;white-space:pre;">debug</div>
<div class="t m" style="left:2543.8px;top:862.2px;height:38px;line-height:38px;font-size:28.2px;color:#dedede;letter-spacing:-0.393px;white-space:pre;">.</div>
<div class="t m" style="left:2560.4px;top:862.2px;height:38px;line-height:38px;font-size:28.2px;color:#f9cc33;letter-spacing:-0.393px;white-space:pre;">watch</div>
<div class="t m" style="left:2643.0px;top:862.2px;height:38px;line-height:38px;font-size:28.2px;color:#dedede;letter-spacing:-0.393px;white-space:pre;">(</div>
<div class="t m" style="left:2659.6px;top:862.2px;height:38px;line-height:38px;font-size:28.2px;color:#f28e5c;letter-spacing:-0.393px;white-space:pre;">'Map'</div>
<div class="t m" style="left:2742.2px;top:862.2px;height:38px;line-height:38px;font-size:28.2px;color:#dedede;letter-spacing:-0.393px;white-space:pre;">, {</div>
<div class="t m" style="left:2444.7px;top:900.7px;height:38px;line-height:38px;font-size:28.2px;color:#f9cc33;letter-spacing:-0.393px;white-space:pre;">width</div>
<div class="t m" style="left:2527.3px;top:900.7px;height:38px;line-height:38px;font-size:28.2px;color:#dedede;letter-spacing:-0.393px;white-space:pre;">: () =&gt; </div>
<div class="t m" style="left:2659.6px;top:900.7px;height:38px;line-height:38px;font-size:28.2px;color:#c87ff8;letter-spacing:-0.393px;white-space:pre;">this</div>
<div class="t m" style="left:2725.7px;top:900.7px;height:38px;line-height:38px;font-size:28.2px;color:#dedede;letter-spacing:-0.393px;white-space:pre;">.</div>
<div class="t m" style="left:2742.2px;top:900.7px;height:38px;line-height:38px;font-size:28.2px;color:#f9cc33;letter-spacing:-0.393px;white-space:pre;">map</div>
<div class="t m" style="left:2791.8px;top:900.7px;height:38px;line-height:38px;font-size:28.2px;color:#dedede;letter-spacing:-0.393px;white-space:pre;">.</div>
<div class="t m" style="left:2808.3px;top:900.7px;height:38px;line-height:38px;font-size:28.2px;color:#f9cc33;letter-spacing:-0.393px;white-space:pre;">width</div>
<div class="t m" style="left:2891.0px;top:900.7px;height:38px;line-height:38px;font-size:28.2px;color:#dedede;letter-spacing:-0.393px;white-space:pre;">,</div>
<div class="t m" style="left:2444.7px;top:939.1px;height:38px;line-height:38px;font-size:28.2px;color:#f9cc33;letter-spacing:-0.393px;white-space:pre;">height</div>
<div class="t m" style="left:2543.8px;top:939.1px;height:38px;line-height:38px;font-size:28.2px;color:#dedede;letter-spacing:-0.393px;white-space:pre;">: () =&gt; </div>
<div class="t m" style="left:2676.1px;top:939.1px;height:38px;line-height:38px;font-size:28.2px;color:#c87ff8;letter-spacing:-0.393px;white-space:pre;">this</div>
<div class="t m" style="left:2742.2px;top:939.1px;height:38px;line-height:38px;font-size:28.2px;color:#dedede;letter-spacing:-0.393px;white-space:pre;">.</div>
<div class="t m" style="left:2758.7px;top:939.1px;height:38px;line-height:38px;font-size:28.2px;color:#f9cc33;letter-spacing:-0.393px;white-space:pre;">map</div>
<div class="t m" style="left:2808.3px;top:939.1px;height:38px;line-height:38px;font-size:28.2px;color:#dedede;letter-spacing:-0.393px;white-space:pre;">.</div>
<div class="t m" style="left:2824.9px;top:939.1px;height:38px;line-height:38px;font-size:28.2px;color:#f9cc33;letter-spacing:-0.393px;white-space:pre;">height</div>
<div class="t m" style="left:2924.0px;top:939.1px;height:38px;line-height:38px;font-size:28.2px;color:#dedede;letter-spacing:-0.393px;white-space:pre;">,</div>
<div class="t m" style="left:2378.5px;top:977.5px;height:38px;line-height:38px;font-size:28.2px;color:#dedede;letter-spacing:-0.393px;white-space:pre;">});</div>
<div class="t m" style="left:2312.4px;top:1015.9px;height:38px;line-height:38px;font-size:28.2px;color:#dedede;letter-spacing:-0.393px;white-space:pre;">}</div>
<div class="t m" style="left:2312.4px;top:1092.8px;height:38px;line-height:38px;font-size:28.2px;color:#f9cc33;letter-spacing:-0.393px;white-space:pre;">update</div>
<div class="t m" style="left:2411.6px;top:1092.8px;height:38px;line-height:38px;font-size:28.2px;color:#dedede;letter-spacing:-0.393px;white-space:pre;">() {</div>
<div class="t m" style="left:2378.5px;top:1131.2px;height:38px;line-height:38px;font-size:28.2px;color:#c87ff8;letter-spacing:-0.393px;white-space:pre;">this</div>
<div class="t m" style="left:2444.7px;top:1131.2px;height:38px;line-height:38px;font-size:28.2px;color:#dedede;letter-spacing:-0.393px;white-space:pre;">.</div>
<div class="t m" style="left:2461.2px;top:1131.2px;height:38px;line-height:38px;font-size:28.2px;color:#f9cc33;letter-spacing:-0.393px;white-space:pre;">debug</div>
<div class="t m" style="left:2543.8px;top:1131.2px;height:38px;line-height:38px;font-size:28.2px;color:#dedede;letter-spacing:-0.393px;white-space:pre;">.</div>
<div class="t m" style="left:2560.4px;top:1131.2px;height:38px;line-height:38px;font-size:28.2px;color:#f9cc33;letter-spacing:-0.393px;white-space:pre;">update</div>
<div class="t m" style="left:2659.6px;top:1131.2px;height:38px;line-height:38px;font-size:28.2px;color:#dedede;letter-spacing:-0.393px;white-space:pre;">();</div>
<div class="t m" style="left:2312.4px;top:1208.1px;height:38px;line-height:38px;font-size:28.2px;color:#dedede;letter-spacing:-0.393px;white-space:pre;">}</div>
<div class="t m" style="left:2312.4px;top:1285.0px;height:38px;line-height:38px;font-size:28.2px;color:#f9cc33;letter-spacing:-0.393px;white-space:pre;">render</div>
<div class="t m" style="left:2411.6px;top:1285.0px;height:38px;line-height:38px;font-size:28.2px;color:#dedede;letter-spacing:-0.393px;white-space:pre;">() {</div>
<div class="t m" style="left:2378.5px;top:1323.4px;height:38px;line-height:38px;font-size:28.2px;color:#c87ff8;letter-spacing:-0.393px;white-space:pre;">this</div>
<div class="t m" style="left:2444.7px;top:1323.4px;height:38px;line-height:38px;font-size:28.2px;color:#dedede;letter-spacing:-0.393px;white-space:pre;">.</div>
<div class="t m" style="left:2461.2px;top:1323.4px;height:38px;line-height:38px;font-size:28.2px;color:#f9cc33;letter-spacing:-0.393px;white-space:pre;">map</div>
<div class="t m" style="left:2510.8px;top:1323.4px;height:38px;line-height:38px;font-size:28.2px;color:#dedede;letter-spacing:-0.393px;white-space:pre;">.</div>
<div class="t m" style="left:2527.3px;top:1323.4px;height:38px;line-height:38px;font-size:28.2px;color:#f9cc33;letter-spacing:-0.393px;white-space:pre;">render</div>
<div class="t m" style="left:2626.5px;top:1323.4px;height:38px;line-height:38px;font-size:28.2px;color:#dedede;letter-spacing:-0.393px;white-space:pre;">();</div>
<div class="t m" style="left:2312.4px;top:1361.8px;height:38px;line-height:38px;font-size:28.2px;color:#dedede;letter-spacing:-0.393px;white-space:pre;">}</div>
<div class="t m" style="left:2246.3px;top:1400.2px;height:38px;line-height:38px;font-size:28.2px;color:#dedede;letter-spacing:-0.393px;white-space:pre;">}</div>
<div class="t m" style="left:2378.5px;top:1169.7px;height:38px;line-height:38px;font-size:28.2px;color:#c87ff8;letter-spacing:-0.393px;white-space:pre;">this</div>
<div class="t m" style="left:2444.7px;top:1169.7px;height:38px;line-height:38px;font-size:28.2px;color:#dedede;letter-spacing:-0.393px;white-space:pre;">.</div>
<svg class="r" style="left:2460px;top:1176px;" width="24" height="23" viewBox="0 0 24 23"><path d="M1.5 1 H13 a2 2 0 0 1 1.6 .8 L22.5 11.5 L14.6 21.2 a2 2 0 0 1 -1.6 .8 H1.5Z" fill="#4c8df6" stroke="#4c8df6" stroke-width="1"/></svg>
<div class="r" style="left:2484px;top:1171px;width:50px;height:33px;background:#0b7fab;"></div>
<div class="t m" style="left:2484.2px;top:1169.7px;height:38px;line-height:38px;font-size:28.2px;color:#f9cc33;letter-spacing:-0.393px;white-space:pre;">foo</div>
<div class="t m" style="left:2533.8px;top:1169.7px;height:38px;line-height:38px;font-size:28.2px;color:#dedede;letter-spacing:-0.393px;white-space:pre;">.</div>
<svg class="r" style="left:2549px;top:1176px;" width="24" height="23" viewBox="0 0 24 23"><path d="M2 1.5 H13 a2 2 0 0 1 1.6 .8 L22 11.5 L14.6 20.7 a2 2 0 0 1 -1.6 .8 H2Z" fill="#6a5c3a" stroke="#4c7fd0" stroke-width="2"/></svg>
<div class="t m" style="left:2573.3px;top:1169.7px;height:38px;line-height:38px;font-size:28.2px;color:#f9cc33;letter-spacing:-0.393px;white-space:pre;">update</div>
<div class="t m" style="left:2672.5px;top:1169.7px;height:38px;line-height:38px;font-size:28.2px;color:#dedede;letter-spacing:-0.393px;white-space:pre;">();</div>
<div class="r" style="left:2095px;top:1963px;width:1206px;height:2px;background:#5c5c5c;"></div>
<div class="r" style="left:2095px;top:1965px;width:1206px;height:66px;background:#282828;"></div>
<div class="t m" style="left:2112.0px;top:1973.0px;height:44px;line-height:44px;font-size:34px;color:#c7c7c7;font-weight:700;">{</div>
<div class="t m" style="left:2136.0px;top:1973.0px;height:44px;line-height:44px;font-size:34px;color:#c7c7c7;font-weight:700;">}</div>
<div class="t" style="left:2182.6px;top:1978.0px;height:40px;line-height:40px;font-size:30.5px;color:#c7c7c7;letter-spacing:0.28px;">Line 30, Column 1</div>
<div class="t" style="left:3050.0px;top:1978.0px;height:40px;line-height:40px;font-size:30.5px;color:#a8c7fa;letter-spacing:0.67px;">Coverage: n/a</div>
<!-- s_dbg -->
<div class="r" style="left:3371px;top:324px;width:402px;height:55px;background:#5c4300;border-radius:28px;"></div>
<svg class="r" style="left:3396px;top:335px;" width="34" height="34" viewBox="0 0 34 34"><circle cx="17" cy="17" r="14" stroke="#fde293" stroke-width="3" fill="none"/><path d="M17 15.5 V24.5" stroke="#fde293" stroke-width="3.2"/><circle cx="17" cy="10" r="2" fill="#fde293"/></svg>
<div class="t" style="left:3442.0px;top:332.0px;height:40px;line-height:40px;font-size:30.5px;color:#fbe7a0;letter-spacing:0.49px;">Paused on breakpoint</div>
<div class="r" style="left:3303px;top:394px;width:537px;height:55px;background:#2e3032;"></div>
<svg class="r" style="left:3328.0px;top:412.0px;" width="14" height="20" viewBox="0 0 14 20"><path d="M0 0 V20 L14 10.0Z" fill="#c7c7c7"/></svg>
<div class="t" style="left:3357.0px;top:402.0px;height:40px;line-height:40px;font-size:30.5px;color:#e3e3e3;letter-spacing:0.67px;">Watch</div>
<div class="r" style="left:3303px;top:449px;width:537px;height:55px;background:#2e3032;"></div>
<svg class="r" style="left:3325.0px;top:470.0px;" width="20" height="14" viewBox="0 0 20 14"><path d="M0 0 H20 L10.0 14Z" fill="#c7c7c7"/></svg>
<div class="t" style="left:3357.0px;top:457.0px;height:40px;line-height:40px;font-size:30.5px;color:#e3e3e3;letter-spacing:0.49px;">Breakpoints</div>
<div class="r" style="left:3303px;top:503px;width:537px;height:2px;background:#5c5c5c;"></div>
<div class="r" style="left:3318px;top:519px;width:30px;height:30px;background:#3a3a3a;box-sizing:border-box;border:2px solid #757575;border-radius:6px;"></div>
<div class="t" style="left:3364.0px;top:513.5px;height:40px;line-height:40px;font-size:30.5px;color:#e3e3e3;letter-spacing:0.48px;">Pause on uncaught exceptions</div>
<div class="r" style="left:3318px;top:565px;width:30px;height:30px;background:#3a3a3a;box-sizing:border-box;border:2px solid #757575;border-radius:6px;"></div>
<div class="t" style="left:3364.0px;top:559.5px;height:40px;line-height:40px;font-size:30.5px;color:#e3e3e3;letter-spacing:0.47px;">Pause on caught exceptions</div>
<div class="r" style="left:3303px;top:609px;width:537px;height:2px;background:#5c5c5c;"></div>
<svg class="r" style="left:3325.0px;top:637.0px;" width="20" height="14" viewBox="0 0 20 14"><path d="M0 0 H20 L10.0 14Z" fill="#c7c7c7"/></svg>
<svg class="r" style="left:3357px;top:626px;" width="34" height="34" viewBox="0 0 34 34"><rect x="2.5" y="2.5" width="29" height="29" rx="3" stroke="#ee8953" stroke-width="3.4" fill="none"/><path d="M13.5 12.5 L9 17 L13.5 21.5 M20.5 12.5 L25 17 L20.5 21.5" stroke="#ee8953" stroke-width="3" fill="none"/></svg>
<div class="t" style="left:3404.0px;top:622.0px;height:40px;line-height:40px;font-size:30.5px;color:#e3e3e3;letter-spacing:0.23px;">PlayState.js</div>
<div class="r" style="left:3303px;top:667px;width:537px;height:49px;background:#5c4300;"></div>
<div class="r" style="left:3353px;top:677px;width:30px;height:30px;background:#7cacf8;border-radius:6px;"></div>
<svg class="r" style="left:3353px;top:677px;" width="30" height="30" viewBox="0 0 30 30"><path d="M6 15.5 L12.5 22 L24.5 8" stroke="#1f1f1f" stroke-width="4" fill="none"/></svg>
<div class="t m" style="left:3399.0px;top:674.5px;height:35px;line-height:35px;font-size:27.2px;color:#9a9a9a;letter-spacing:0.01px;">this.foo.update();</div>
<div class="t" style="left:3785.5px;top:672.0px;height:40px;line-height:40px;font-size:30.5px;color:#fbe7a0;letter-spacing:1.57px;">23</div>
<div class="r" style="left:3303px;top:716px;width:537px;height:5px;background:#292b2c;"></div>
<div class="r" style="left:3303px;top:720px;width:537px;height:54px;background:#2e3032;"></div>
<svg class="r" style="left:3325.0px;top:741.0px;" width="20" height="14" viewBox="0 0 20 14"><path d="M0 0 H20 L10.0 14Z" fill="#c7c7c7"/></svg>
<div class="t" style="left:3357.0px;top:728.0px;height:40px;line-height:40px;font-size:30.5px;color:#e3e3e3;">Scope</div>
<div class="r" style="left:3303px;top:774px;width:537px;height:2px;background:#5c5c5c;"></div>
<svg class="r" style="left:3329.5px;top:800.0px;" width="17" height="12" viewBox="0 0 17 12"><path d="M0 0 H17 L8.5 12Z" fill="#c7c7c7"/></svg>
<div class="t m" style="left:3358.6px;top:787.0px;height:35px;line-height:35px;font-size:27.2px;color:#e3e3e3;letter-spacing:-0.03px;">Local</div>
<svg class="r" style="left:3351.5px;top:840.0px;" width="11" height="16" viewBox="0 0 11 16"><path d="M0 0 V16 L11 8.0Z" fill="#c7c7c7"/></svg>
<div class="t m" style="left:3379.5px;top:829.5px;height:35px;line-height:35px;font-size:27.2px;color:#8f8f8f;letter-spacing:-0.10px;">this</div>
<div class="t m" style="left:3445.1px;top:829.5px;height:35px;line-height:35px;font-size:27.2px;color:#e3e3e3;letter-spacing:-0.01px;">: PlayState</div>
<svg class="r" style="left:3332.0px;top:882.5px;" width="12" height="17" viewBox="0 0 12 17"><path d="M0 0 V17 L12 8.5Z" fill="#c7c7c7"/></svg>
<div class="t m" style="left:3357.0px;top:873.5px;height:35px;line-height:35px;font-size:27.2px;color:#e3e3e3;letter-spacing:0.01px;">Module</div>
<svg class="r" style="left:3332.0px;top:927.5px;" width="12" height="17" viewBox="0 0 12 17"><path d="M0 0 V17 L12 8.5Z" fill="#c7c7c7"/></svg>
<div class="t m" style="left:3357.0px;top:917.5px;height:35px;line-height:35px;font-size:27.2px;color:#e3e3e3;letter-spacing:0.01px;">Global</div>
<div class="t m" style="left:3732.0px;top:917.5px;height:35px;line-height:35px;font-size:27.2px;color:#e3e3e3;letter-spacing:0.37px;">Window</div>
<div class="r" style="left:3303px;top:956px;width:537px;height:55px;background:#2e3032;"></div>
<svg class="r" style="left:3325.0px;top:977.0px;" width="20" height="14" viewBox="0 0 20 14"><path d="M0 0 H20 L10.0 14Z" fill="#c7c7c7"/></svg>
<div class="t" style="left:3357.0px;top:964.0px;height:40px;line-height:40px;font-size:30.5px;color:#e3e3e3;letter-spacing:0.30px;">Call Stack</div>
<div class="r" style="left:3303px;top:1011px;width:537px;height:2px;background:#5c5c5c;"></div>
<div class="t" style="left:3353.5px;top:1020.0px;height:40px;line-height:40px;font-size:30.5px;color:#e3e3e3;letter-spacing:0.74px;">update</div>
<div class="t" style="left:3585.5px;top:1020.0px;height:40px;line-height:40px;font-size:30.5px;color:#8f8f8f;letter-spacing:0.50px;">PlayState.js:23</div>
<div class="r" style="left:3303px;top:1066px;width:537px;height:2px;background:#5c5c5c;"></div>
<div class="t" style="left:3353.5px;top:1074.6px;height:40px;line-height:40px;font-size:30.5px;color:#e3e3e3;letter-spacing:0.74px;">update</div>
<div class="t" style="left:3525.0px;top:1074.6px;height:40px;line-height:40px;font-size:30.5px;color:#8f8f8f;letter-spacing:0.68px;">StateMachine.js:40</div>
<div class="r" style="left:3303px;top:1121px;width:537px;height:2px;background:#5c5c5c;"></div>
<div class="t" style="left:3353.5px;top:1129.2px;height:40px;line-height:40px;font-size:30.5px;color:#e3e3e3;letter-spacing:0.74px;">update</div>
<div class="t" style="left:3637.0px;top:1129.2px;height:40px;line-height:40px;font-size:30.5px;color:#8f8f8f;letter-spacing:0.34px;">Game.js:55</div>
<div class="r" style="left:3303px;top:1176px;width:537px;height:2px;background:#5c5c5c;"></div>
<div class="t" style="left:3353.5px;top:1183.8px;height:40px;line-height:40px;font-size:30.5px;color:#e3e3e3;letter-spacing:0.41px;">gameLoop</div>
<div class="t" style="left:3641.5px;top:1183.8px;height:40px;line-height:40px;font-size:30.5px;color:#8f8f8f;letter-spacing:-0.16px;">Game.js:41</div>
<div class="r" style="left:3303px;top:1230px;width:537px;height:2px;background:#5c5c5c;"></div>
<div class="t" style="left:3353.5px;top:1238.4px;height:40px;line-height:40px;font-size:30.5px;color:#e3e3e3;letter-spacing:1.32px;">start</div>
<div class="t" style="left:3637.6px;top:1238.4px;height:40px;line-height:40px;font-size:30.5px;color:#8f8f8f;letter-spacing:0.27px;">Game.js:22</div>
<div class="r" style="left:3303px;top:1285px;width:537px;height:2px;background:#5c5c5c;"></div>
<div class="t" style="left:3353.5px;top:1293.0px;height:40px;line-height:40px;font-size:30.5px;color:#e3e3e3;letter-spacing:0.40px;">(anonymous)</div>
<div class="t" style="left:3651.0px;top:1293.0px;height:40px;line-height:40px;font-size:30.5px;color:#8f8f8f;letter-spacing:0.67px;">main.js:50</div>
<svg class="r" style="left:3319px;top:1028px;" width="26" height="24" viewBox="0 0 26 24"><path d="M1 7.5 H11 V1 L24.5 12 L11 23 V16.5 H1Z" fill="#7cacf8"/></svg>
<div class="r" style="left:3303px;top:1338px;width:537px;height:55px;background:#2e3032;"></div>
<svg class="r" style="left:3328.0px;top:1356.0px;" width="14" height="20" viewBox="0 0 14 20"><path d="M0 0 V20 L14 10.0Z" fill="#c7c7c7"/></svg>
<div class="t" style="left:3357.0px;top:1346.0px;height:40px;line-height:40px;font-size:30.5px;color:#e3e3e3;letter-spacing:0.47px;">XHR/fetch Breakpoints</div>
<div class="r" style="left:3303px;top:1393px;width:537px;height:55px;background:#2e3032;"></div>
<svg class="r" style="left:3328.0px;top:1411.0px;" width="14" height="20" viewBox="0 0 14 20"><path d="M0 0 V20 L14 10.0Z" fill="#c7c7c7"/></svg>
<div class="t" style="left:3357.0px;top:1401.0px;height:40px;line-height:40px;font-size:30.5px;color:#e3e3e3;letter-spacing:0.38px;">DOM Breakpoints</div>
<div class="r" style="left:3303px;top:1448px;width:537px;height:55px;background:#2e3032;"></div>
<svg class="r" style="left:3328.0px;top:1466.0px;" width="14" height="20" viewBox="0 0 14 20"><path d="M0 0 V20 L14 10.0Z" fill="#c7c7c7"/></svg>
<div class="t" style="left:3357.0px;top:1456.0px;height:40px;line-height:40px;font-size:30.5px;color:#e3e3e3;letter-spacing:0.37px;">Global Listeners</div>
<div class="r" style="left:3303px;top:1503px;width:537px;height:55px;background:#2e3032;"></div>
<svg class="r" style="left:3328.0px;top:1521.0px;" width="14" height="20" viewBox="0 0 14 20"><path d="M0 0 V20 L14 10.0Z" fill="#c7c7c7"/></svg>
<div class="t" style="left:3357.0px;top:1511.0px;height:40px;line-height:40px;font-size:30.5px;color:#e3e3e3;letter-spacing:0.49px;">Event Listener Breakpoints</div>
<div class="r" style="left:3303px;top:1558px;width:537px;height:55px;background:#2e3032;"></div>
<svg class="r" style="left:3328.0px;top:1576.0px;" width="14" height="20" viewBox="0 0 14 20"><path d="M0 0 V20 L14 10.0Z" fill="#c7c7c7"/></svg>
<div class="t" style="left:3357.0px;top:1566.0px;height:40px;line-height:40px;font-size:30.5px;color:#e3e3e3;letter-spacing:0.39px;">CSP Violation Breakpoints</div>
<!-- s_bottom -->
<div class="r" style="left:1645px;top:2031px;width:2195px;height:70px;background:#3c3c3c;"></div>
<div class="r" style="left:1645px;top:2030px;width:2195px;height:2px;background:#5c5c5c;"></div>
<div class="r" style="left:1680px;top:2049px;width:8px;height:8px;background:#c7c7c7;border-radius:50%;"></div><div class="r" style="left:1680px;top:2061px;width:8px;height:8px;background:#c7c7c7;border-radius:50%;"></div><div class="r" style="left:1680px;top:2073px;width:8px;height:8px;background:#c7c7c7;border-radius:50%;"></div>
<div class="t" style="left:1741.0px;top:2047.0px;height:40px;line-height:40px;font-size:30.5px;color:#c7c7c7;letter-spacing:0.60px;">Console</div>
<div class="t" style="left:1908.7px;top:2047.0px;height:40px;line-height:40px;font-size:30.5px;color:#c7c7c7;letter-spacing:0.58px;">AI assistance</div>
<svg class="r" style="left:2109px;top:2050px;" width="28" height="30" viewBox="0 0 28 30"><path d="M9 3 H19 M11 3 V12 L3.5 25 a1.5 1.5 0 0 0 1.3 2.2 H23.2 a1.5 1.5 0 0 0 1.3 -2.2 L17 12 V3" stroke="#c7c7c7" stroke-width="2.6" fill="none" stroke-linejoin="round"/></svg>
<div class="t" style="left:2221.0px;top:2047.0px;height:40px;line-height:40px;font-size:30.5px;color:#a8c7fa;letter-spacing:1.15px;">What's new</div>
<svg class="r" style="left:2398px;top:2055px;" width="22" height="22" viewBox="0 0 22 22"><path d="M2.5 2.5 L19.5 19.5 M19.5 2.5 L2.5 19.5" stroke="#e3e3e3" stroke-width="2.6" fill="none"/></svg>
<div class="r" style="left:2196px;top:2094px;width:243px;height:6px;background:#a8c7fa;border-radius:6px 6px 0 0;"></div>
<svg class="r" style="left:3787.8px;top:2052px;" width="26" height="26" viewBox="0 0 26 26"><path d="M2.3 2.3 L23.7 23.700 M23.7 2.3 L2.3 23.7" stroke="#d6d6d6" stroke-width="3.900" fill="none"/></svg>
<div style="position:absolute;left:0;top:2px;width:3840px;height:2097px;border-radius:22px 22px 30px 30px;box-shadow:inset 0 0 0 2px rgba(255,255,255,0.23);"></div>
</div></body></html>
